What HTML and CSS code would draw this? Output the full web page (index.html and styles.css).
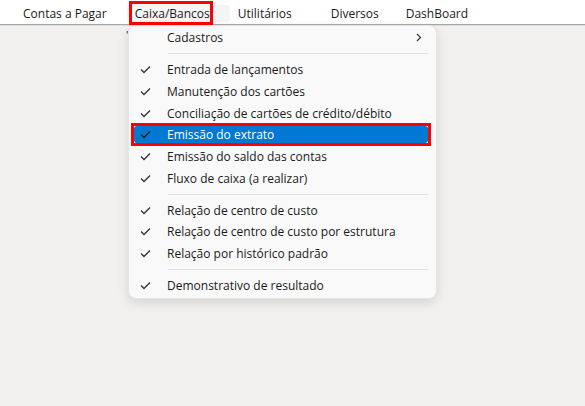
FILE: index.html
```html
<!DOCTYPE html>
<html lang="pt">
<head>
    <meta charset="UTF-8">
    <title>Caixa/Bancos</title>
    <link rel="stylesheet" href="styles.css">
</head>
<body>
    <div class="menubar">
        <span class="menu-item item-contas">Contas a Pagar</span>
        <span class="menu-item item-caixa active">Caixa/Bancos</span>
        <span class="menu-item item-util">Utilitários</span>
        <span class="menu-item item-div">Diversos</span>
        <span class="menu-item item-dash">DashBoard</span>
    </div>

    <div class="workspace">
        <span class="stray">'</span>

        <div class="dropdown">
            <div class="entry has-sub">
                <span class="check"></span>
                <span class="label">Cadastros</span>
                <span class="chevron">
                    <svg width="6" height="9" viewBox="0 0 6 9"><path d="M1 1 L4.5 4.5 L1 8" fill="none" stroke="#333" stroke-width="1.2"/></svg>
                </span>
            </div>
            <div class="sep"></div>
            <div class="entry"><span class="check"><svg width="11" height="9" viewBox="0 0 11 9"><path d="M1 4.5 L4 7.5 L10 1.5" fill="none" stroke="#333" stroke-width="1.3"/></svg></span><span class="label">Entrada de lançamentos</span></div>
            <div class="entry"><span class="check"><svg width="11" height="9" viewBox="0 0 11 9"><path d="M1 4.5 L4 7.5 L10 1.5" fill="none" stroke="#333" stroke-width="1.3"/></svg></span><span class="label">Manutenção dos cartões</span></div>
            <div class="entry"><span class="check"><svg width="11" height="9" viewBox="0 0 11 9"><path d="M1 4.5 L4 7.5 L10 1.5" fill="none" stroke="#333" stroke-width="1.3"/></svg></span><span class="label">Conciliação de cartões de crédito/débito</span></div>
            <div class="entry selected"><span class="check"><svg width="11" height="9" viewBox="0 0 11 9"><path d="M1 4.5 L4 7.5 L10 1.5" fill="none" stroke="#1a1a1a" stroke-width="1.3"/></svg></span><span class="label">Emissão do extrato</span></div>
            <div class="entry"><span class="check"><svg width="11" height="9" viewBox="0 0 11 9"><path d="M1 4.5 L4 7.5 L10 1.5" fill="none" stroke="#333" stroke-width="1.3"/></svg></span><span class="label">Emissão do saldo das contas</span></div>
            <div class="entry"><span class="check"><svg width="11" height="9" viewBox="0 0 11 9"><path d="M1 4.5 L4 7.5 L10 1.5" fill="none" stroke="#333" stroke-width="1.3"/></svg></span><span class="label">Fluxo de caixa (a realizar)</span></div>
            <div class="sep"></div>
            <div class="entry"><span class="check"><svg width="11" height="9" viewBox="0 0 11 9"><path d="M1 4.5 L4 7.5 L10 1.5" fill="none" stroke="#333" stroke-width="1.3"/></svg></span><span class="label">Relação de centro de custo</span></div>
            <div class="entry"><span class="check"><svg width="11" height="9" viewBox="0 0 11 9"><path d="M1 4.5 L4 7.5 L10 1.5" fill="none" stroke="#333" stroke-width="1.3"/></svg></span><span class="label">Relação de centro de custo por estrutura</span></div>
            <div class="entry"><span class="check"><svg width="11" height="9" viewBox="0 0 11 9"><path d="M1 4.5 L4 7.5 L10 1.5" fill="none" stroke="#333" stroke-width="1.3"/></svg></span><span class="label">Relação por histórico padrão</span></div>
            <div class="sep"></div>
            <div class="entry"><span class="check"><svg width="11" height="9" viewBox="0 0 11 9"><path d="M1 4.5 L4 7.5 L10 1.5" fill="none" stroke="#333" stroke-width="1.3"/></svg></span><span class="label">Demonstrativo de resultado</span></div>
        </div>
    </div>
</body>
</html>
```

FILE: styles.css
```css
* {
    margin: 0;
    padding: 0;
    box-sizing: border-box;
}

body {
    font-family: 'Open Sans', 'Noto Sans', sans-serif;
    font-size: 12px;
    color: #1a1a1a;
    background: #f2f1f0;
    width: 585px;
    height: 406px;
    overflow: hidden;
}

.menubar {
    display: flex;
    align-items: center;
    height: 25px;
    background: #ffffff;
    border-bottom: 1px solid #a8a8a8;
    box-shadow: 0 1px 0 #dcdcdc;
}

.menu-item {
    position: relative;
    white-space: nowrap;
    line-height: 17px;
    margin-top: 3px;
}

.item-contas { margin-left: 23px; }
.item-caixa  { margin-left: 28px; }
.item-util   { margin-left: 28px; }
.item-div    { margin-left: 39px; }
.item-dash   { margin-left: 27px; }

/* hovered top-level entry with annotation frame */
.menu-item.active {
    isolation: isolate;
}

.menu-item.active::before {
    content: '';
    position: absolute;
    left: -8px;
    right: -20px;
    top: 0;
    bottom: 0;
    background: #f5f5f5;
    border-radius: 4px;
    z-index: -1;
}

.menu-item.active::after {
    content: '';
    position: absolute;
    left: -6px;
    right: -3px;
    top: -4px;
    bottom: -3px;
    border: 3px solid #ff0000;
}

.workspace {
    position: relative;
    height: 381px;
}

.stray {
    position: absolute;
    left: 126px;
    top: 2px;
    font-size: 11px;
}

.dropdown {
    position: absolute;
    left: 128px;
    top: 0;
    width: 309px;
    padding: 1px 0 2px;
    background: #f9f9f9;
    border: 1px solid #e4e4e4;
    border-radius: 8px;
    box-shadow: 0 4px 12px rgba(0, 0, 0, 0.12);
}

.entry {
    position: relative;
    display: flex;
    align-items: center;
    height: 21.75px;
    margin: 0 8px 0 5px;
    padding-left: 6px;
    border-radius: 4px;
    white-space: nowrap;
}

.entry .check {
    width: 27px;
    display: flex;
    align-items: center;
}

.entry .label {
    flex: 1;
}

.entry .chevron {
    display: flex;
    margin-right: 6px;
}

.entry.selected {
    color: #ffffff;
    isolation: isolate;
}

.entry.selected::before {
    content: '';
    position: absolute;
    left: 0;
    right: 0;
    top: 2px;
    bottom: 3px;
    background: #0078d4;
    border-radius: 3px;
    z-index: -1;
}

.entry.selected::after {
    content: '';
    position: absolute;
    left: -3px;
    right: -3px;
    top: -1px;
    bottom: 0;
    border: 3px solid #ff0000;
}

.sep {
    height: 1px;
    background: #e0e0e0;
    margin: 4.5px 8px 4.5px 39px;
}
```
